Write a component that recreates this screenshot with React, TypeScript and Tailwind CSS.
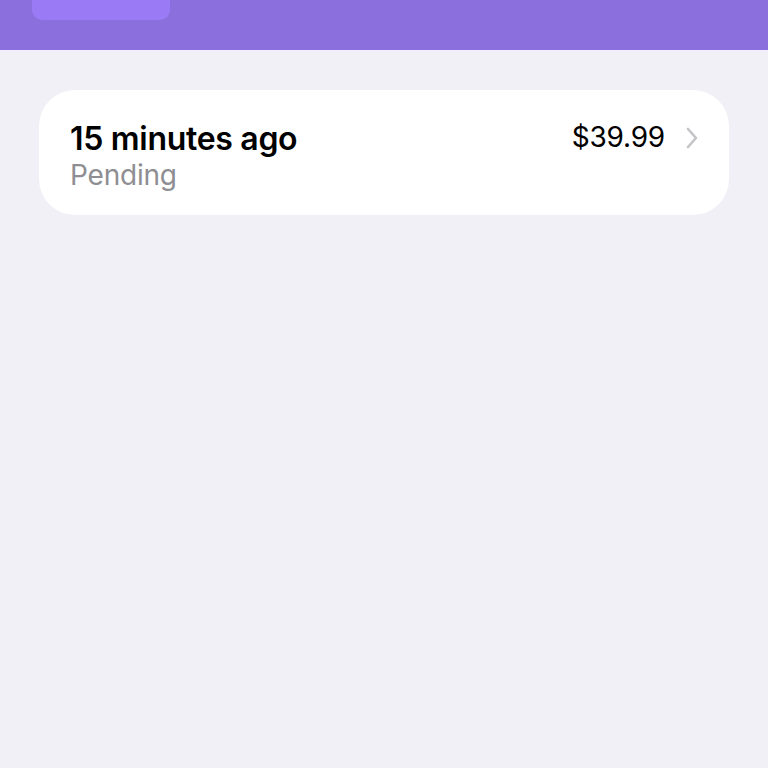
export default function App() {
  return (
    <div className="w-[768px] h-[768px] bg-[#f1f0f6] overflow-hidden" style={{ fontFamily: 'Inter, "Noto Sans", sans-serif' }}>
      <div className="h-[50px] bg-[#8a6fdd] border-b-2 border-[#f3eefc] box-content">
        <div className="ml-[32px] w-[138px] h-[20px] bg-[#9b7af5] rounded-b-[10px]" />
      </div>
      <div className="px-[39px] pt-[38px]">
        <div className="h-[125px] bg-white rounded-[36px] flex items-start pl-[31px] pr-[30px]">
          <div className="flex flex-col pt-[29px]">
            <span className="text-[32px] font-semibold text-black leading-[40px] tracking-[-0.3px]">15 minutes ago</span>
            <span className="text-[28px] text-[#8e8e93] leading-[32px] tracking-[-0.2px]">Pending</span>
          </div>
          <div className="ml-auto flex items-center pt-[31px] gap-[20px]">
            <span className="text-[28px] text-black leading-[32px] tracking-[-0.2px]">$39.99</span>
            <svg width="14" height="22" viewBox="0 0 14 22" fill="none" className="mt-[2px]">
              <path d="M3 2l8 9-8 9" stroke="#c4c4c7" strokeWidth="2.6" strokeLinecap="round" strokeLinejoin="round" />
            </svg>
          </div>
        </div>
      </div>
    </div>
  );
}
